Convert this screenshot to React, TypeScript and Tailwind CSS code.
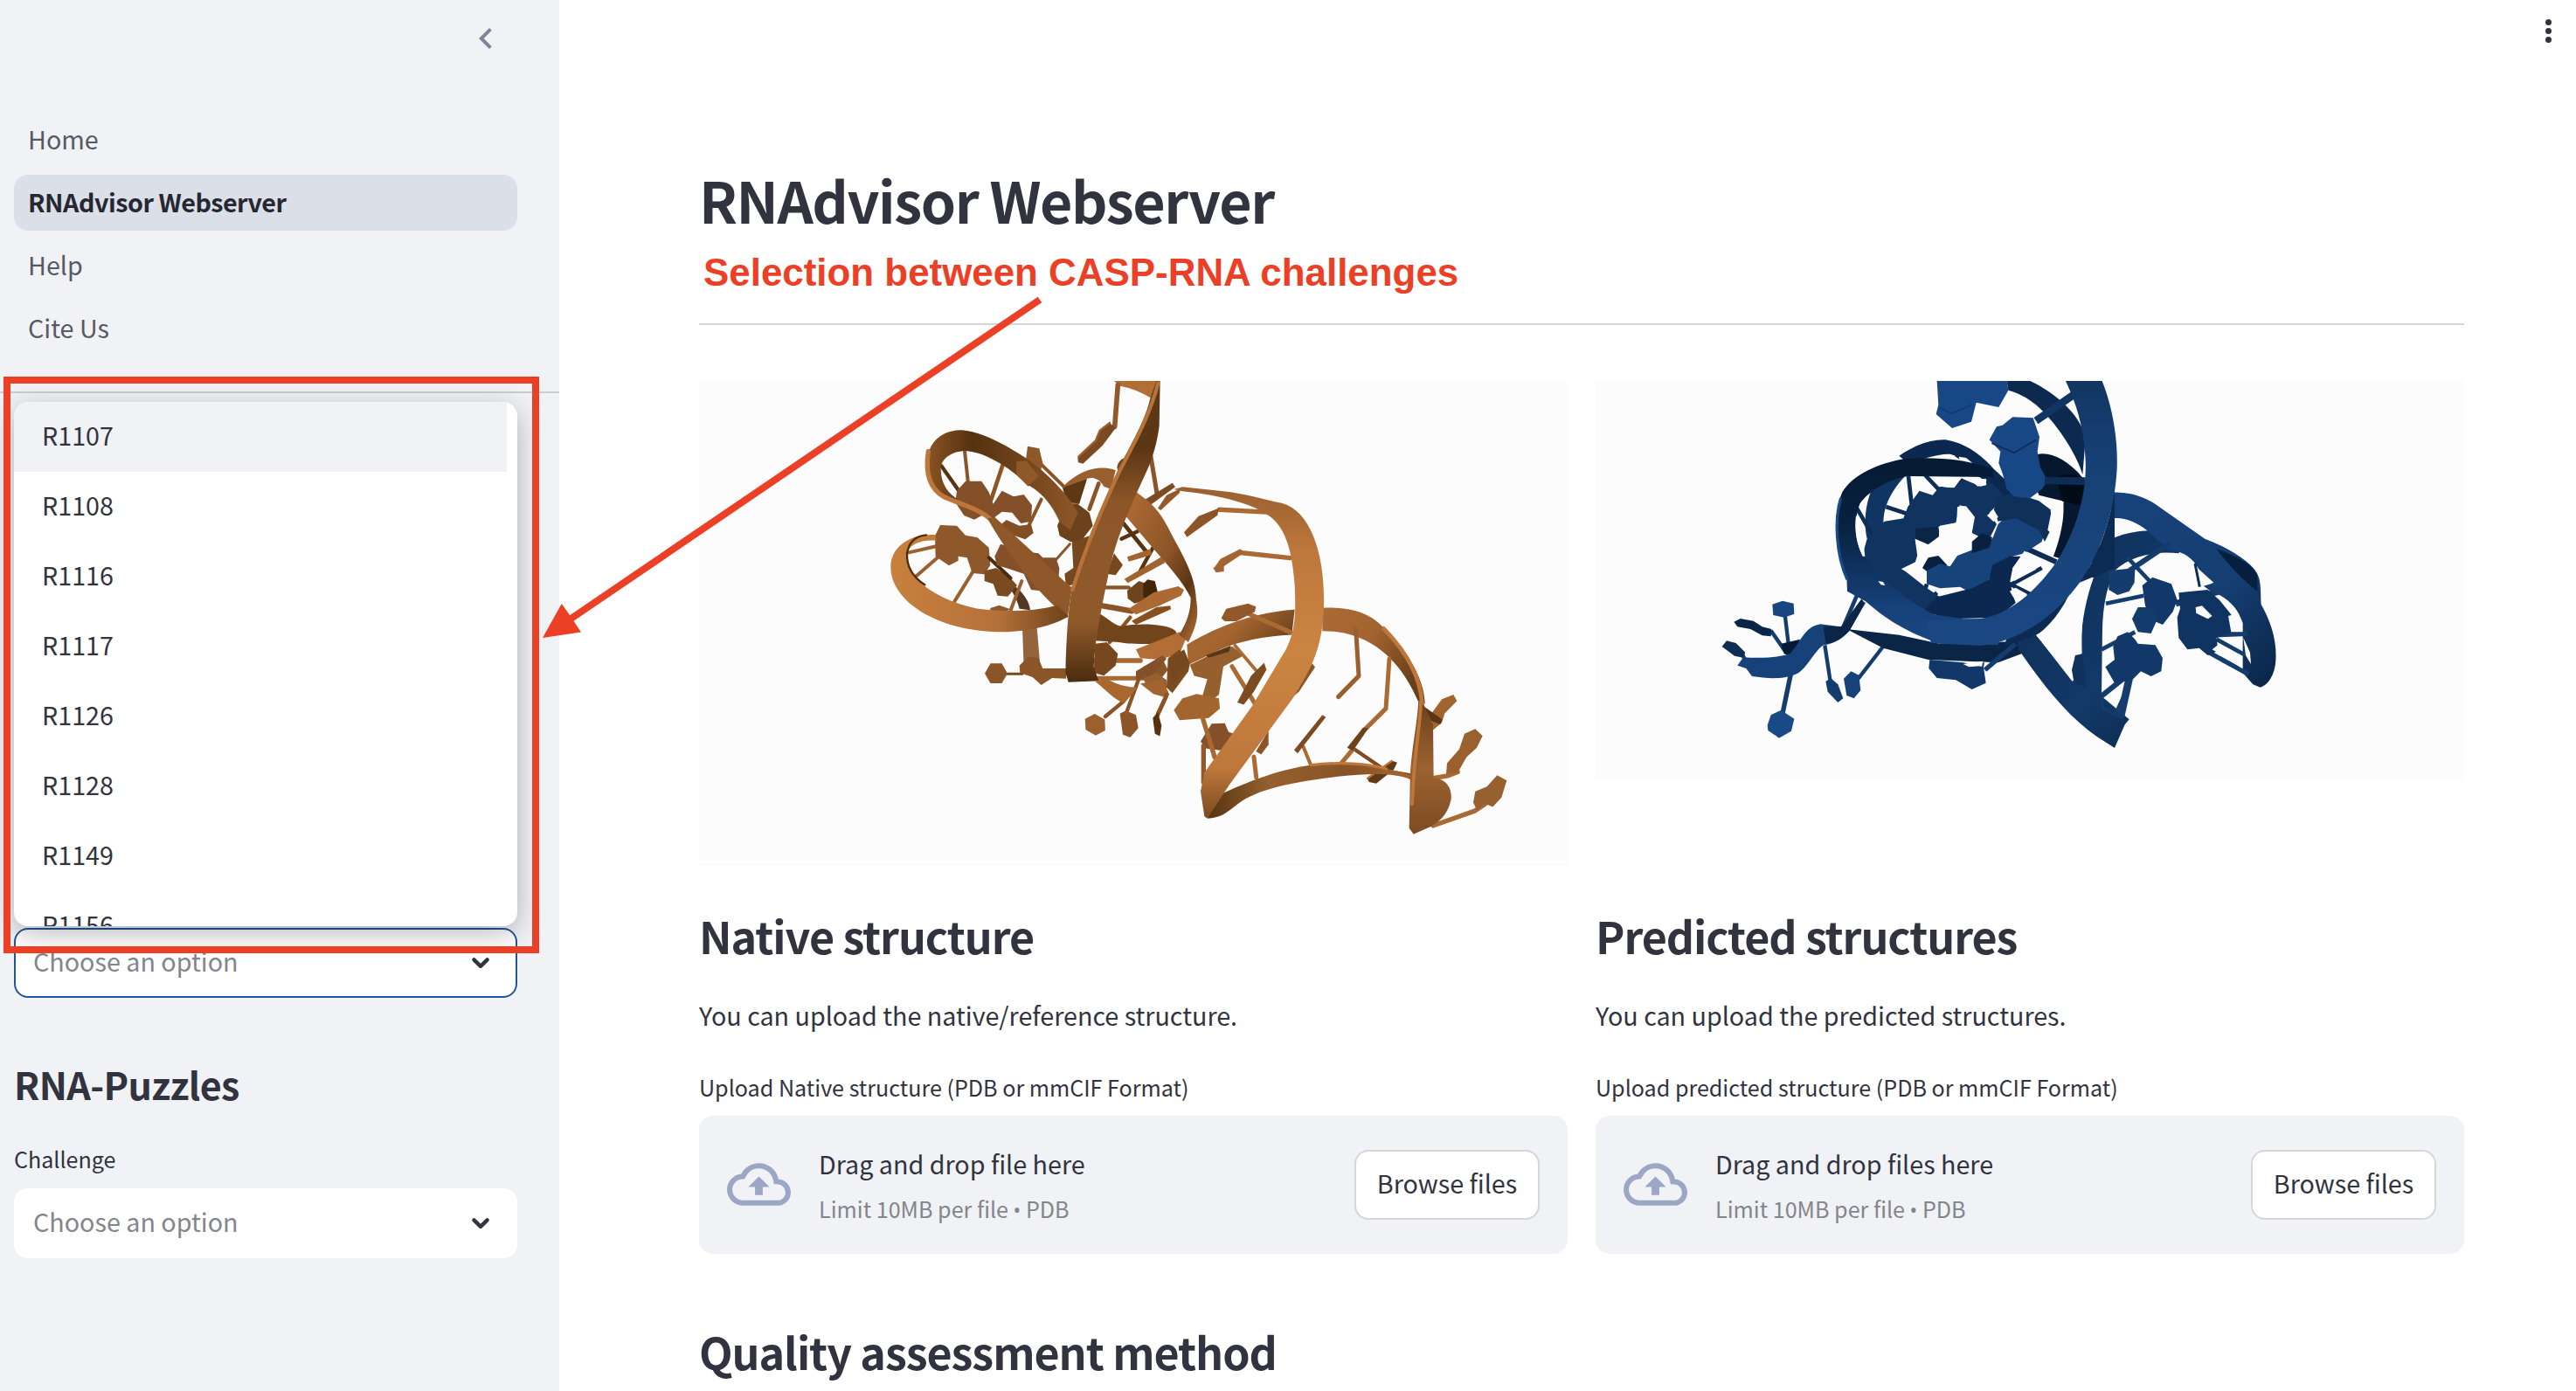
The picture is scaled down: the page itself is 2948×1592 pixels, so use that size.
import type { ReactNode } from "react";

const challenges = ["R1107", "R1108", "R1116", "R1117", "R1126", "R1128", "R1149", "R1156"];

const nav = [
  { label: "Home", active: false },
  { label: "RNAdvisor Webserver", active: true },
  { label: "Help", active: false },
  { label: "Cite Us", active: false },
];

function ChevronDown() {
  return (
    <svg className="h-8 w-8" viewBox="0 0 32 32" fill="none" stroke="#31333f" strokeWidth="4.4" strokeLinecap="round" strokeLinejoin="round">
      <path d="M8.4 12.4 16 19.8 23.6 12.4" />
    </svg>
  );
}

function Select({ focused }: { focused?: boolean }) {
  return (
    <div
      className={
        "flex h-20 items-center justify-between rounded-2xl border-2 bg-white pr-[24px] pl-[20px] " +
        (focused ? "border-[#20569b]" : "border-white")
      }
    >
      <span className="-mt-[4px] text-[28.7px] leading-[40px] text-[#83858c]">Choose an option</span>
      <ChevronDown />
    </div>
  );
}

function Sidebar() {
  return (
    <aside className="h-full w-[640px] shrink-0 bg-[#f0f2f6]">
      <div className="flex h-[128px] justify-end pt-5 pr-[60px]">
        <svg className="h-12 w-12" viewBox="0 0 24 24" fill="#808495">
          <path d="M15.41 7.41 14 6l-6 6 6 6 1.41-1.41L10.83 12z" />
        </svg>
      </div>
      <nav className="flex w-[592px] flex-col gap-2 pl-4">
        {nav.map((n) => (
          <a
            key={n.label}
            className={
              "block h-16 rounded-2xl pl-4 text-[28.7px] leading-[61px] " +
              (n.active ? "bg-[#dadfe8] font-bold tracking-[-0.49px] text-[#262730]" : "text-[#575965]")
            }
          >
            {n.label}
          </a>
        ))}
      </nav>
      <hr className="mt-10 border-t-2 border-[#cbccd2]" />
      <div className="mt-[612px] w-[592px] pl-4">
        <div className="relative">
          <Select focused />
          <ul className="absolute bottom-[82px] left-0 h-[600px] w-[576px] overflow-hidden rounded-2xl bg-white shadow-[0_8px_32px_rgba(0,0,0,0.28)]">
            {challenges.map((c, i) => (
              <li
                key={c}
                className={"h-20 w-[564px] pl-8 text-[28.7px] leading-[76px] text-[#31333f] " + (i === 0 ? "bg-[#f0f2f6]" : "")}
              >
                {c}
              </li>
            ))}
          </ul>
        </div>
        <h2 className="mt-[69px] text-[43px] leading-[58px] font-bold tracking-[-0.65px] text-[#31333f]">RNA-Puzzles</h2>
        <p className="mt-9 text-[25.1px] leading-[42px] text-[#31333f]">Challenge</p>
        <div className="mt-[13px]">
          <Select />
        </div>
      </div>
    </aside>
  );
}

function Hex({ x, y, r, fill, sy = 1, rot = 0 }: { x: number; y: number; r: number; fill: string; sy?: number; rot?: number }) {
  return (
    <polygon
      points="1,0 0.5,0.87 -0.5,0.87 -1,0 -0.5,-0.87 0.5,-0.87"
      transform={`translate(${x} ${y}) rotate(${rot}) scale(${r} ${r * sy})`}
      fill={fill}
    />
  );
}

function OrangeMolecule() {
  return (
    <svg className="block h-[555px] w-[994px]" viewBox="800 436 994 555">
      <defs>
        <linearGradient id="oLoop" x1="0" y1="0" x2="1" y2="0">
          <stop offset="0" stopColor="#8a5426" />
          <stop offset="0.3" stopColor="#55320f" />
          <stop offset="1" stopColor="#8f5729" />
        </linearGradient>
        <linearGradient id="oLow" x1="0" y1="0" x2="1" y2="0">
          <stop offset="0" stopColor="#c8803d" />
          <stop offset="0.6" stopColor="#b5713a" />
          <stop offset="1" stopColor="#6d421a" />
        </linearGradient>
        <linearGradient id="oMain" x1="0" y1="0" x2="0" y2="1">
          <stop offset="0" stopColor="#5f3a17" />
          <stop offset="0.22" stopColor="#5a3614" />
          <stop offset="0.4" stopColor="#8c5628" />
          <stop offset="0.8" stopColor="#905a2b" />
          <stop offset="1" stopColor="#4a2c0d" />
        </linearGradient>
        <linearGradient id="oRight" x1="0" y1="0" x2="1" y2="1">
          <stop offset="0" stopColor="#b06c36" />
          <stop offset="0.5" stopColor="#8c5527" />
          <stop offset="0.75" stopColor="#5a3512" />
          <stop offset="1" stopColor="#b5713a" />
        </linearGradient>
        <linearGradient id="oBig" x1="0" y1="0" x2="0" y2="1">
          <stop offset="0" stopColor="#9a602f" />
          <stop offset="0.2" stopColor="#bf783c" />
          <stop offset="0.5" stopColor="#cb8441" />
          <stop offset="0.85" stopColor="#bd773b" />
          <stop offset="1" stopColor="#7a4a20" />
        </linearGradient>
        <linearGradient id="oArch" x1="0" y1="0" x2="1" y2="0.5">
          <stop offset="0" stopColor="#a96a34" />
          <stop offset="0.5" stopColor="#a36430" />
          <stop offset="1" stopColor="#6a401b" />
        </linearGradient>
        <linearGradient id="oFloor" x1="0" y1="0" x2="1" y2="0">
          <stop offset="0" stopColor="#55330f" />
          <stop offset="0.3" stopColor="#96602e" />
          <stop offset="0.7" stopColor="#865226" />
          <stop offset="1" stopColor="#a5662f" />
        </linearGradient>
        <linearGradient id="oEnd" x1="0" y1="0" x2="0" y2="1">
          <stop offset="0" stopColor="#6a411a" />
          <stop offset="0.5" stopColor="#9c6230" />
          <stop offset="1" stopColor="#7d4c22" />
        </linearGradient>
      </defs>

      {/* left half of the strand, backmost parts first */}
      <g transform="translate(980 420) scale(0.33333)" strokeLinecap="round" strokeLinejoin="round">
        <path d="M885 48H1035L1010 106Q960 75 905 65Z" fill="#b16e35" />
        <path d="M898 62L887 205" stroke="#94592b" strokeWidth="17" fill="none" />
        <path d="M760 312L820 255 835 218 870 192 890 210 845 270 778 332 762 328Z" fill="#7a4a22" />
        <path d="M763 308L822 252 836 218 870 192" stroke="#9c602f" strokeWidth="7" fill="none" />
        <path d="M895 345Q900 315 925 312L900 360Z" fill="#7a4a22" />
        <path d="M710 410C770 350 840 335 890 355L875 420 850 410C830 380 810 378 790 384L765 470 725 470Z" fill="#9a5f2e" />
        <path d="M708 415L792 385 765 470 720 460Z" fill="#5d3814" />
        <path d="M570 895H620L632 1035H575Z" fill="#94653c" />
        <path d="M540 750C570 770 595 805 597 835L560 830C552 800 540 780 528 760Z" fill="#553824" />
        <path d="M495 1054H570" stroke="#7a4a20" strokeWidth="9" />
        <Hex x={480} y={1052} r={39} fill="#8b5528" />
        <path d="M560 1025L590 995 625 1000 640 1035 720 1035V1070L672 1068 635 1092 605 1065 562 1050Z" fill="#8b5528" />

        {/* spokes of the upper loop */}
        <g stroke="#8a5427" strokeWidth="12" fill="none">
          <path d="M370 270L384 400" />
          <path d="M503 335L463 455" strokeWidth="14" />
          <path d="M635 455L592 545" />
          <path d="M832 400L800 488" strokeWidth="14" />
          <path d="M733 608L685 662" strokeWidth="9" />
          <path d="M635 335L712 410" />
          <path d="M1008 290L1033 440" strokeWidth="15" />
        </g>
        <path d="M292 340L352 425" stroke="#57340f" strokeWidth="13" />
        {/* spokes of the lower loop */}
        <g stroke="#9a602f" strokeWidth="12" fill="none">
          <path d="M180 637L290 612" />
          <path d="M200 723L290 645" />
          <path d="M337 805L402 700" />
          <path d="M530 835L568 735" />
        </g>

        {/* nucleobases */}
        <path d="M345 425L375 392 430 392 455 430 470 470 500 425 540 445 575 438 603 475 600 530 565 537 535 500 500 497 470 520 440 505 405 524 370 510 340 465Z" fill="#83502a" />
        <path d="M475 560L515 525 560 545 600 540 608 570 580 592 545 580 500 590Z" fill="#824e24" />
        <path d="M270 580L288 543 345 545 375 578 415 585 455 620 460 680 440 712 398 708 380 655 350 650 350 665 318 682 272 650Z" fill="#8f582b" />
        <path d="M440 700L480 690 530 725 552 750 520 788 485 785 470 745 440 735Z" fill="#7a4a21" />
        <path d="M455 655L530 725" stroke="#4a2c0c" strokeWidth="12" />
        <path d="M475 650L495 608 540 620 590 635 625 640 640 655 685 655 697 690 692 760 650 770 600 765 575 710 530 695 482 680Z" fill="#83502a" />
        <path d="M460 828L490 818 530 832 500 845 460 845Z" fill="#8f582b" />
        <path d="M582 320L588 272 628 280 640 330 628 375 590 410 550 370Z" fill="#8f5829" />
        <path d="M690 545L720 470 760 470 800 500 812 545 770 600 735 600 698 580Z" fill="#6c421c" />
        <path d="M740 600L800 580 760 740 720 755 715 710 745 690Z" fill="#764820" />

        {/* upper loop ribbon */}
        <path
          d="M243 330C243 255 300 215 362 217C440 222 540 285 590 318C650 360 730 440 760 500L735 560 700 535C670 470 640 435 590 405C520 340 440 292 375 288C320 290 290 320 290 350C290 400 315 435 350 455L310 452C255 430 240 380 243 330Z"
          fill="url(#oLoop)"
        />
        <path d="M247 290C235 370 255 420 300 445C340 465 400 480 445 510C520 570 620 680 738 765" stroke="#bd773a" strokeWidth="16" fill="none" />
        <path d="M450 520L475 515 740 760 725 862C650 800 540 680 450 520Z" fill="#8f582a" />
        <path d="M582 322L550 325 550 370 590 408 628 375Z" fill="#8f5829" />
        {/* lower loop ribbon */}
        <path
          d="M270 576C180 572 116 620 118 690C120 800 270 908 500 910C600 910 690 882 728 856L690 818C600 842 500 840 420 830C330 815 172 750 172 645C178 610 220 592 275 596Z"
          fill="url(#oLow)"
        />
        <path d="M240 577C200 580 180 605 174 640C172 690 200 725 235 748" stroke="#4b2c0c" strokeWidth="7" fill="none" />

        {/* tangle right of the main ribbon */}
        <g stroke="#8a5427" strokeWidth="13" fill="none">
          <path d="M850 757L935 757" />
          <path d="M845 820L945 838" strokeWidth="19" />
          <path d="M870 945L940 860" />
          <path d="M815 1008H975" strokeWidth="17" stroke="#a8682f" />
          <path d="M830 1069H990" strokeWidth="15" stroke="#a8682f" />
          <path d="M915 535L1000 640" strokeWidth="14" stroke="#55330f" />
          <path d="M910 590L965 565" stroke="#55330f" />
          <path d="M975 700L1038 585" stroke="#55330f" />
          <path d="M970 1070L930 1180" />
          <path d="M1065 1130L1035 1195" />
          <path d="M915 1150L855 1200" />
        </g>
        <path d="M930 652L1010 625 1015 645 935 668Z" fill="#a1642f" />
        <path d="M920 728L1050 650 1060 672 932 742Z" fill="#a1642f" />
        <path d="M975 465L1085 398 1095 412 985 492Z" fill="#7a4a20" />
        <path d="M1035 485L1065 440 1112 418 1110 432 1045 492Z" fill="#94592a" />
        <path d="M1225 690L1262 672V702L1235 706Z" fill="#a3652f" />
        <path d="M930 768L970 735 1000 745 995 800 955 812 932 795Z" fill="#6f441d" />
        <path d="M985 745L1000 730 1025 735 1035 775 1010 800 985 790Z" fill="#41260a" />
        <path d="M935 830L1020 775 1105 753 1125 765 1115 785 1040 820 960 850Z" fill="#ab6a33" />
        <path d="M945 872L1030 825 1078 820 1080 832 1040 850 960 885Z" fill="#84511f" />
        <path d="M820 840C850 850 880 885 910 890C970 880 1060 880 1095 905L1120 950C1050 950 950 955 900 945L820 940Z" fill="#70451c" />
        <path d="M820 950L860 945 898 985 890 1025 850 1060 815 1050Z" fill="#774820" />
        <path d="M960 970L1110 910 1135 925 1110 985 1040 1005 975 1000Z" fill="#b26e36" />
        <path d="M960 1070L985 1030 1050 1000 1070 1040 1050 1065 1000 1075Z" fill="#8b5528" />
        <path d="M985 1070L1030 1050 1065 1075V1135L1000 1100Z" fill="#97602f" />
        <path d="M820 1080C860 1110 880 1140 920 1155L965 1100C930 1100 890 1090 860 1070Z" fill="#a8682f" />
        <path d="M1070 1000L1110 970 1145 1020 1140 1045 1085 1120 1065 1100Z" fill="#7d4b20" />
        <path d="M885 640L915 680 890 715 860 710Z" fill="#774820" />
        {/* bases hanging below the tangle */}
        <Hex x={820} y={1228} r={40} sy={0.9} rot={30} fill="#9a602e" />
        <path d="M905 1190L925 1180 960 1195 968 1240 940 1272 915 1262Z" fill="#8b5528" />

        {/* right hand ribbon */}
        <path
          d="M955 425C1020 470 1045 500 1075 560C1110 630 1165 710 1167 800C1175 850 1172 880 1140 945L1108 920C1140 870 1148 830 1148 792C1120 735 1060 670 1018 622L925 512Z"
          fill="url(#oRight)"
        />
        {/* main vertical ribbon */}
        <path
          d="M1043 48L1040 200C1035 250 1020 300 1005 340C960 440 900 560 870 690C850 790 820 920 815 1030L832 1078 728 1082 718 1050C722 900 730 800 745 740C790 600 850 460 900 350C950 250 990 190 1010 105L1030 48Z"
          fill="url(#oMain)"
        />
        <path d="M1036 55C1010 160 960 250 905 355C850 470 790 610 742 765" stroke="#b8733a" strokeWidth="13" fill="none" />
      </g>

      {/* right half of the strand */}
      <g transform="translate(1300 420) scale(0.33333 0.35714)" strokeLinecap="round" strokeLinejoin="round">
        <path d="M175 890C290 825 420 785 545 778L535 858C440 862 350 880 290 905L180 955Z" fill="url(#oArch)" />
        <path d="M640 772C730 768 800 785 850 835C920 900 990 990 992 1080L968 1070C935 1000 850 845 640 846Z" fill="url(#oArch)" />
        <path d="M850 838C920 905 978 990 982 1080" stroke="#bd773a" strokeWidth="14" fill="none" />
        <path d="M185 955L250 925 330 895 370 925 300 960 285 1050 265 1065 228 1055 245 1000 200 990Z" fill="#96602e" />
        <path d="M240 925L325 893 320 912 250 932Z" fill="#5a3614" />
        <path d="M110 940L165 905 185 950 125 1020Z" fill="#774820" />
        <path d="M0 975L90 925 105 935 60 985 0 1000Z" fill="#84502a" />
        <path d="M15 1015L90 1000 115 1050 105 1060 60 1048Z" fill="#a1642f" />
        <path d="M105 1050L75 1110" stroke="#8a5427" strokeWidth="12" />
        <path d="M58 1125L75 1105 88 1150 82 1183 65 1175Z" fill="#55330f" />
        <path d="M130 1100L160 1062 208 1048 285 1062 288 1095 250 1125 150 1132Z" fill="#a3652f" />
        <path d="M222 1200L260 1143 305 1142 318 1170 335 1175 300 1230 240 1222Z" fill="#83502a" />
        <path d="M232 1215L232 1330" stroke="#94592a" strokeWidth="16" />
        <path d="M228 1122L270 1250" stroke="#a8682f" strokeWidth="16" />
        <path d="M412 1232L455 1165 455 1210 430 1242Z" fill="#8b5528" />
        <g stroke="#aa6a33" strokeWidth="15" fill="none">
          <path d="M286 457L450 465" />
          <path d="M358 595L530 612" />
          <path d="M385 790L530 850" />
          <path d="M330 960L408 1078" />
          <path d="M340 893L412 972" strokeWidth="11" />
          <path d="M755 840L765 990 695 1057" stroke="#99602e" />
          <path d="M870 935L858 1095 790 1158" />
          <path d="M575 1218L600 1275" strokeWidth="12" />
          <path d="M745 1222L860 1295 940 1308" strokeWidth="12" stroke="#7d4b20" />
          <path d="M705 1270L745 1225" />
          <path d="M405 1250L413 1315" />
          <path d="M1020 1318L1070 1310 1105 1298" />
          <path d="M1020 1470L1165 1422 1200 1400" />
        </g>
        <path d="M165 530L215 478 285 452 280 475 175 545Z" fill="#8b5528" />
        <path d="M268 645L290 615 358 583 372 595 275 655Z" fill="#a3652f" />
        <path d="M293 805L310 775 385 758 412 768 408 785 345 815 305 815Z" fill="#91592a" />
        <path d="M348 1075L395 990 440 948 448 970 405 1040 370 1082Z" fill="#7d4b20" />
        <path d="M530 1065L605 950 615 962 560 1040Z" fill="#8b5528" />
        <path d="M543 1228L640 1115 652 1122 555 1238Z" fill="#7d4b20" />
        <path d="M725 1220L780 1155 798 1158 745 1230Z" fill="#6c421c" />
        <path d="M795 1320L880 1262 897 1268 885 1290 825 1335 800 1330Z" fill="#5f3a16" />
        <path d="M795 1318L878 1263" stroke="#b8733a" strokeWidth="7" />
        <path d="M1015 1110L1050 1065 1090 1050 1102 1070 1060 1110 1050 1140 1018 1165Z" fill="#a1642f" />
        <path d="M992 1090L1052 1130 1045 1145 1000 1130Z" fill="#5a3614" />
        <path d="M1065 1305L1068 1270 1110 1225 1128 1175 1165 1160 1190 1182 1170 1220 1135 1250 1105 1300Z" fill="#9a602e" />
        <path d="M1158 1395L1165 1360 1205 1345 1240 1308 1273 1325 1255 1380 1225 1410 1200 1400 1170 1420Z" fill="#97602f" />

        <path
          d="M245 1447L290 1370C450 1300 560 1272 700 1268C780 1270 860 1285 945 1308L942 1322C890 1300 800 1302 700 1312C550 1328 420 1350 350 1400C310 1430 290 1445 245 1447Z"
          fill="url(#oFloor)"
        />
        <path d="M600 1276C700 1264 800 1272 860 1288" stroke="#bd773a" strokeWidth="9" fill="none" />
        <path
          d="M130 392L160 384 300 398C370 405 430 422 500 436C600 460 650 600 645 770C640 900 605 960 540 1060L320 1340 245 1447 235 1440 222 1360 235 1300 400 1085 515 905C545 850 550 800 545 700C535 560 500 500 445 470C400 440 300 412 160 398Z"
          fill="url(#oBig)"
        />
        <path d="M970 1070L988 1082 1020 1145 1022 1318C1060 1318 1086 1345 1082 1385C1072 1435 1035 1465 1000 1478L953 1497 938 1478 942 1300C950 1200 965 1150 970 1070Z" fill="url(#oEnd)" />
        <path d="M978 1075C975 1160 955 1230 948 1400" stroke="#bd773a" strokeWidth="12" fill="none" />
      </g>
    </svg>
  );
}

function BlueMolecule() {
  return (
    <svg className="block h-[456px] w-[994px]" viewBox="1826 436 994 456">
      <defs>
        <linearGradient id="bRing" x1="0" y1="0" x2="0" y2="1">
          <stop offset="0" stopColor="#123661" />
          <stop offset="0.3" stopColor="#164075" />
          <stop offset="1" stopColor="#1a4883" />
        </linearGradient>
        <linearGradient id="bLoop" x1="0" y1="0" x2="0" y2="1">
          <stop offset="0" stopColor="#051a33" />
          <stop offset="0.35" stopColor="#08213f" />
          <stop offset="0.8" stopColor="#16417a" />
          <stop offset="1" stopColor="#194781" />
        </linearGradient>
        <linearGradient id="bLeg" x1="0" y1="0" x2="1" y2="1">
          <stop offset="0" stopColor="#0d2d54" />
          <stop offset="0.6" stopColor="#133968" />
          <stop offset="1" stopColor="#0a2444" />
        </linearGradient>
        <linearGradient id="bWing" x1="0" y1="0" x2="1" y2="1">
          <stop offset="0" stopColor="#17427b" />
          <stop offset="0.6" stopColor="#153e72" />
          <stop offset="1" stopColor="#0a2546" />
        </linearGradient>
      </defs>
      <g transform="translate(1820 420) scale(0.33333)" strokeLinejoin="round">
        {/* tail on the left */}
        <g stroke="#143c6d" strokeWidth="13" fill="none">
          <path d="M668 850L680 950" />
          <path d="M620 905L668 975" />
          <path d="M688 1055L660 1190" strokeWidth="16" />
          <path d="M805 955L824 1080" />
          <path d="M1005 960L920 1070" />
          <path d="M915 785L870 890" strokeWidth="14" />
          <path d="M520 985L535 1010" />
        </g>
        <path d="M625 815L660 803 698 812 700 848 665 860 628 852Z" fill="#184680" />
        <path d="M493 875L515 864 560 872 590 892 622 900 620 925 590 922 550 900 505 892Z" fill="#0a2546" />
        <path d="M452 960L468 940 500 948 532 980 525 998 495 992Z" fill="#0d2d54" />
        <path d="M608 1230L620 1195 655 1178 700 1208 690 1250 648 1274 610 1248Z" fill="#1a4a86" />
        <path d="M808 1080L825 1068 850 1090 868 1138 850 1152 815 1115Z" fill="#143c6d" />
        <path d="M870 1070L895 1045 922 1058 928 1110 905 1138 880 1128Z" fill="#174279" />
        <path d="M655 950L720 935 700 1000 665 985Z" fill="#061a35" />
        <path d="M505 1025L525 997C580 1000 640 1000 685 985C720 950 735 890 790 883L860 892 930 800 945 810 890 905C860 940 830 950 800 955C770 975 750 1025 715 1050C670 1075 610 1070 555 1062L535 1035Z" fill="#174279" />
        <path d="M800 890L862 892 932 795 940 812 890 905C860 935 830 950 808 950Z" fill="#0a2546" />
        <path d="M880 900L1060 920 1200 950 1560 940 1480 985 1400 1015 1160 1005 1005 965Z" fill="#0a2546" />
        <path d="M1165 1005L1280 1015 1350 1030 1358 1085 1310 1107 1255 1075 1190 1068 1162 1035Z" fill="#12386a" />
        <path d="M1280 1020L1345 1010 1355 1025 1300 1030Z" fill="#fcfcfd" />
        <path d="M1355 1040L1460 950" stroke="#143c6d" strokeWidth="16" />

        {/* back ribbon forming the inner left arc */}
        <path d="M1060 305C1120 265 1170 248 1220 250C1290 262 1340 300 1385 350L1460 420 1430 460 1380 420C1330 370 1280 320 1240 300 1200 295 1130 320 1090 330Z" fill="#0b2850" />
        <path d="M1080 375C1020 440 1000 500 1008 560L950 590C935 520 950 450 975 400Z" fill="#113562" />
        <path d="M1535 300C1580 290 1640 320 1690 380L1695 480 1620 660 1590 650C1625 560 1630 480 1620 460L1540 440 1520 380Z" fill="#06182f" />
        <path d="M1600 380C1640 360 1690 370 1700 400L1700 480 1620 460Z" fill="#020b18" />
        {/* spokes */}
        <g stroke="#0d2d54" strokeWidth="14" fill="none">
          <path d="M1092 375L1103 470" />
          <path d="M1150 372L1200 425" />
          <path d="M1015 480L1090 505" />
          <path d="M915 485L970 580" />
          <path d="M1280 385L1240 440" />
          <path d="M1365 385L1370 430" />
          <path d="M1130 825L1190 775" />
          <path d="M1155 745L1145 780" />
          <path d="M1430 755L1550 690" />
          <path d="M1430 740L1530 790" />
          <path d="M1500 625L1600 670" strokeWidth="18" />
          <path d="M1365 730L1385 850" strokeWidth="20" stroke="#143c6d" />
        </g>

        {/* bases inside the ring */}
        <path d="M950 590L1010 530 1075 520 1090 480 1130 425 1175 440 1200 410 1250 415 1280 385 1340 410 1380 400 1420 440 1400 470 1370 500 1395 540 1370 590 1345 600 1330 580 1310 570 1312 510 1290 480 1268 475 1255 535 1200 545 1195 590 1160 610 1115 590 1125 640 1115 672 1070 692 1150 755 1200 790 1180 850 1000 760 930 660Z" fill="#10335f" />
        <path d="M1115 555L1195 548 1197 585 1158 608 1118 590Z" fill="#0a2546" />
        <path d="M1260 480L1290 478 1320 515 1310 570 1330 590 1305 630 1250 645 1232 685 1195 650 1150 700 1140 735 1068 694 1125 665 1115 592 1160 610 1200 580 1195 548 1258 535Z" fill="#fcfcfd" />
        <path d="M1140 690L1160 655 1195 648 1225 680 1180 720Z" fill="#0a2040" />
        <path d="M1155 700L1200 675 1235 685 1260 648 1320 625 1380 590 1400 540 1440 500 1520 520 1565 550 1550 600 1490 640 1450 650 1400 690 1360 740 1310 778 1270 755 1200 760 1155 745Z" fill="#17437b" />
        <path d="M1310 600L1345 570 1380 585 1370 620 1310 640Z" fill="#0a2040" />
        <path d="M1400 450L1450 430 1540 460 1580 490 1585 550 1560 600 1540 560 1460 520 1400 530 1385 490Z" fill="#0f3159" />
        <path d="M1362 510L1385 490 1400 515 1385 532Z" fill="#fcfcfd" />
        <path d="M1190 790L1310 760 1370 730 1380 680 1440 650 1490 650 1450 690 1440 740 1460 810 1400 860 1240 865 1140 840Z" fill="#0b2850" />

        {/* dark loop seen from the left, coming round to the front */}
        <path
          d="M1380 350C1290 315 1180 308 1080 315C990 330 900 370 865 430C835 500 835 620 880 720L882 770 945 805C1030 880 1110 920 1200 950L1400 955 1420 870 1280 865 1180 850C1080 800 990 720 940 655C905 600 905 520 925 470C960 420 1030 385 1090 375L1385 378Z"
          fill="url(#bLoop)"
        />
        <path d="M860 450C838 520 842 640 882 730" stroke="#1a4a86" strokeWidth="10" fill="none" />
        <path d="M912 510C905 560 915 610 935 650L943 650C938 600 935 560 925 530Z" fill="#fcfcfd" />
        <path d="M1210 308L1250 303 1255 315ZM1265 308L1290 312 1312 330 1268 320Z" fill="#fcfcfd" />
        <path d="M1170 378L1275 382 1240 415 1200 410ZM1298 380L1360 385 1358 405 1330 410Z" fill="#fcfcfd" />
        <path d="M988 735L1005 738 1012 750 998 748Z" fill="#fcfcfd" />

        {/* top cluster */}
        <path d="M1190 48H1430L1435 80 1402 138 1325 122 1308 188 1242 210 1187 162 1195 130Z" fill="#184785" />
        <path d="M1310 130L1240 160 1200 140" stroke="#123a6c" strokeWidth="5" fill="none" />
        <path d="M1430 48H1510C1600 90 1690 170 1700 250L1690 370C1670 300 1600 190 1530 130 1500 105 1470 90 1435 80Z" fill="#0c2a4f" />
        <path d="M1530 185L1660 95" stroke="#113562" strokeWidth="26" />
        <path d="M1370 250L1395 205 1415 200 1450 172 1520 175 1542 240 1535 290 1545 345 1570 390 1550 420 1510 450 1455 445 1430 420 1415 365 1402 330 1408 290Z" fill="#184785" />
        <path d="M1378 262L1455 295 1530 250" stroke="#0d2d54" strokeWidth="5" fill="none" />
        <path d="M1560 390L1700 392" stroke="#0d2d54" strokeWidth="26" />
        <path d="M1590 460L1625 462 1620 530 1605 590 1570 560Z" fill="#fcfcfd" />
        <path d="M1450 690L1490 632 1530 650 1530 695 1455 735Z" fill="#fcfcfd" />
        <path d="M1480 745L1545 718 1550 740 1510 768ZM1440 770L1460 758 1500 780 1465 812Z" fill="#fcfcfd" />

        {/* wing on the right */}
        <path d="M1800 520L1800 610 1850 570 1910 565C1880 540 1840 515 1800 520Z" fill="#fcfcfd" />
        <path d="M1720 640C1780 580 1850 565 1920 562L2040 600 2020 640C1940 630 1850 650 1800 700 1770 760 1760 830 1758 900L1755 1130 1850 1210 1835 1228 1800 1308 1740 1270C1640 1200 1560 1100 1470 970L1465 930 1530 920 1660 1080 1655 1010 1665 990 1688 985C1685 900 1690 800 1725 730Z" fill="url(#bLeg)" />
        <path d="M1755 1130L1760 1170 1800 1195 1830 1130" fill="none" stroke="#143c6d" strokeWidth="10" />
        <path d="M1640 730L1740 720 1660 640 1600 760Z" fill="#0a2546" />
        <path d="M1710 720C1670 810 1600 890 1530 920L1420 960 1440 900 1600 760Z" fill="#0c2b52" />
        <path d="M1660 740L1728 722C1700 800 1680 900 1685 990L1665 992 1655 1080 1532 922C1600 870 1640 800 1660 740Z" fill="#fcfcfd" />
        <path d="M1665 990L1690 985 1700 1100 1660 1080 1653 1040Z" fill="#0f315c" />
        <path
          d="M1780 430C1850 430 1900 440 1960 485L2110 590C2190 620 2270 670 2290 710 2305 740 2300 780 2303 815 2340 880 2360 950 2352 1020 2345 1070 2320 1095 2300 1100L2275 1090 2240 1050 2240 880C2225 830 2190 790 2130 770L2090 740 2080 680C2060 650 2030 632 1990 630L1910 560C1870 530 1830 515 1795 520Z"
          fill="url(#bWing)"
        />
        <path d="M2150 625C2220 650 2280 680 2290 720L2290 770C2250 740 2190 680 2150 625Z" fill="#08203f" />
        <path d="M2080 680L2095 755 2130 745 2140 740 2090 695Z" fill="#fcfcfd" />
        <path d="M2076 675L2092 755" stroke="#0d2d54" strokeWidth="9" />
        <g stroke="#143c6d" strokeWidth="14" fill="none">
          <path d="M1850 700L1990 605" strokeWidth="18" />
          <path d="M1845 655L1920 735" />
          <path d="M1770 812L1900 785" />
          <path d="M1755 970L1870 910" />
          <path d="M1755 1130L1830 1070" strokeWidth="18" />
          <path d="M1820 1205L1850 1070" strokeWidth="26" />
          <path d="M2010 812L2180 765" strokeWidth="22" />
          <path d="M2120 978L2260 1055" strokeWidth="16" />
          <path d="M2130 920L2255 915" strokeWidth="18" />
          <path d="M2150 935L2250 990" />
        </g>
        <path d="M1780 700L1870 690 1868 740 1850 770 1810 783 1780 765Z" fill="#143c6d" />
        <path d="M1895 750L1930 722 1995 745 2015 800 2000 840 1965 885 1930 870 1905 820Z" fill="#12386a" />
        <path d="M1860 865L1880 825 1930 825 1945 870 1925 915 1880 910Z" fill="#143c6d" />
        <path d="M1795 960L1810 925 1845 910 1870 935 1880 950 1940 955 1965 1000 1960 1045 1925 1062 1890 1045 1860 1075 1800 1085 1768 1030 1800 1005Z" fill="#12386a" />
        <path d="M2015 860L2025 830 2020 775 2120 765 2160 800 2200 850 2205 910 2150 930 2155 975 2120 990 2090 965 2050 970 2020 930Z" fill="#103462" />
        <path d="M2078 825L2100 820 2135 855 2120 865 2080 845ZM2190 855L2225 845 2240 910 2200 910Z" fill="#fcfcfd" />
        <path d="M2168 935L2220 930 2238 970ZM2135 970L2160 950 2238 1000 2238 1035Z" fill="#fcfcfd" />
        <path d="M2242 930L2265 980 2268 1020 2250 990Z" fill="#fcfcfd" />

        {/* the big front ring */}
        <path
          d="M1632 48H1757C1790 130 1812 240 1808 350C1800 500 1750 640 1680 740C1600 850 1480 940 1340 957L1170 948 1150 870 1340 864C1440 850 1530 770 1600 670C1670 560 1705 430 1700 320C1695 230 1680 150 1632 48Z"
          fill="url(#bRing)"
        />
        <path d="M1800 430C1780 540 1750 640 1680 740L1800 690Z" fill="#0c2b52" />
        <path d="M1345 1040L1350 1015" stroke="#143c6d" strokeWidth="6" />
      </g>
    </svg>
  );
}

function CloudUpload() {
  return (
    <svg className="mb-[2px] h-[73px] w-[73px] shrink-0" viewBox="0 0 24 24" fill="#9ba7c4">
      <path d="M19.35 10.04A7.49 7.49 0 0 0 12 4C9.11 4 6.6 5.64 5.35 8.04A5.994 5.994 0 0 0 0 14c0 3.31 2.69 6 6 6h13c2.76 0 5-2.24 5-5 0-2.64-2.05-4.78-4.65-4.96zM19 18H6c-2.21 0-4-1.79-4-4 0-2.05 1.53-3.76 3.56-3.97l1.07-.11.5-.95A5.469 5.469 0 0 1 12 6c2.62 0 4.88 1.86 5.39 4.43l.3 1.5 1.53.11A2.98 2.98 0 0 1 22 15c0 1.65-1.35 3-3 3zM8 13h2.55v3h2.9v-3H16l-4-4z" />
    </svg>
  );
}

function UploadSection({ title, text, label, drop }: { title: string; text: string; label: string; drop: string }) {
  return (
    <section className="text-[#31333f]">
      <h2 className="text-[50.2px] leading-[68px] font-bold tracking-[-1.05px]">{title}</h2>
      <p className="mt-8 text-[28.7px] leading-[52px]">{text}</p>
      <p className="mt-[35px] text-[25.1px] leading-[42px]">{label}</p>
      <div className="mt-3 flex h-[158px] items-center rounded-2xl bg-[#f0f2f6] px-8">
        <CloudUpload />
        <div className="ml-8 flex-1">
          <p className="mt-1 text-[28.7px] leading-[52px]">{drop}</p>
          <p className="text-[25.1px] leading-[50px] text-[#83858c]">
            Limit 10MB per file <span className="font-['Noto_Sans',sans-serif] text-[23px]">•</span> PDB
          </p>
        </div>
        <button className="h-20 w-[212px] rounded-2xl border-2 border-[#d5d6d9] bg-white pb-1 text-[28.7px] leading-[72px]">
          Browse files
        </button>
      </div>
    </section>
  );
}

function Figure({ children }: { children: ReactNode }) {
  return <div className="self-start bg-[#fcfcfd]">{children}</div>;
}

export default function App() {
  return (
    <div className="relative flex h-[1592px] w-[2948px] overflow-hidden bg-white font-['Noto_Sans_CJK_SC','Noto_Sans',sans-serif]">
      <Sidebar />
      <main className="flex-1 pt-[185px] pr-32 pl-40">
        <h1 className="text-[64.5px] leading-[86px] font-bold tracking-[-1.45px] text-[#31333f]">RNAdvisor Webserver</h1>
        <hr className="mt-[99px] border-t-2 border-[#d5d6d9]" />
        <div className="mt-16 grid grid-cols-2 gap-x-8 gap-y-[45px]">
          <Figure>
            <OrangeMolecule />
          </Figure>
          <Figure>
            <BlueMolecule />
          </Figure>
          <UploadSection
            title="Native structure"
            text="You can upload the native/reference structure."
            label="Upload Native structure (PDB or mmCIF Format)"
            drop="Drag and drop file here"
          />
          <UploadSection
            title="Predicted structures"
            text="You can upload the predicted structures."
            label="Upload predicted structure (PDB or mmCIF Format)"
            drop="Drag and drop files here"
          />
        </div>
        <h2 className="mt-[77px] text-[50.2px] leading-[68px] font-bold tracking-[-1.05px] text-[#31333f]">
          Quality assessment method
        </h2>
      </main>

      <div className="absolute top-[22px] right-[28px] flex flex-col gap-[3px]">
        <i className="h-[7px] w-[7px] rounded-full bg-[#31333f]" />
        <i className="h-[7px] w-[7px] rounded-full bg-[#31333f]" />
        <i className="h-[7px] w-[7px] rounded-full bg-[#31333f]" />
      </div>

      {/* annotation layer */}
      <div className="absolute top-[431px] left-[4px] h-[660px] w-[613px] border-8 border-[#ec4026]" />
      <p className="absolute top-[287px] left-[805px] font-['Liberation_Sans',sans-serif] text-[43.9px] leading-[50px] font-bold whitespace-nowrap text-[#ec4026]">
        Selection between CASP-RNA challenges
      </p>
      <svg className="absolute top-0 left-0 h-[800px] w-[1300px]" viewBox="0 0 1300 800">
        <path d="M1190 343L652 709" stroke="#ec4026" strokeWidth="8" />
        <path d="M621 730 642.7 691 652 704 657 711.5 665 723.5Z" fill="#ec4026" />
      </svg>
    </div>
  );
}
